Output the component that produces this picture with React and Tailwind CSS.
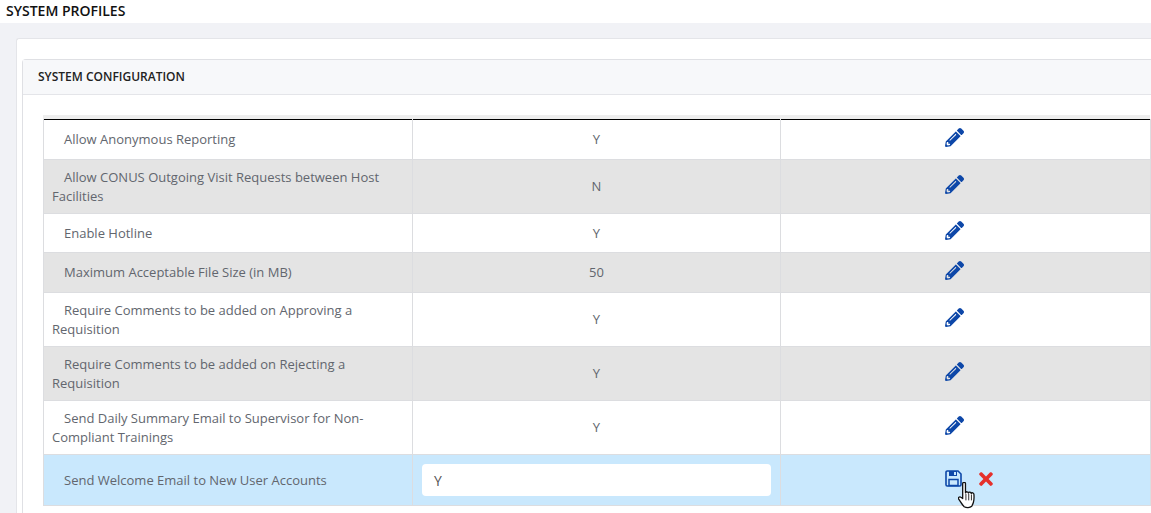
import React from "react";
import { FaPencilAlt, FaTimes } from "react-icons/fa";

const rows = [
  ["Allow Anonymous Reporting", "Y", "h-[40px]", "pt-0"],
  ["Allow CONUS Outgoing Visit Requests between Host Facilities", "N", "h-[54px]", "pt-0"],
  ["Enable Hotline", "Y", "h-[39px]", "pt-[1px]"],
  ["Maximum Acceptable File Size (in MB)", "50", "h-[40px]", "pt-0"],
  ["Require Comments to be added on Approving a Requisition", "Y", "h-[54px]", "pt-[1px]"],
  ["Require Comments to be added on Rejecting a Requisition", "Y", "h-[54px]", "pt-[1px]"],
  ["Send Daily Summary Email to Supervisor for Non-Compliant Trainings", "Y", "h-[54px]", "pt-[1px]"],
];

function SaveIcon() {
  return (
    <svg width="17" height="17" viewBox="0 0 17 17" fill="none">
      <path d="M2.200 1H13L16 4v10.800a1.200 1.200 0 0 1-1.200 1.200H2.200A1.200 1.200 0 0 1 1 14.800V2.200A1.200 1.200 0 0 1 2.200 1Z" stroke="#0d47a8" strokeWidth="1.600" />
      <path d="M4 1h8v5H4Z" fill="#0d47a8" />
      <rect x="9" y="2" width="2" height="3" fill="#c9e8fd" />
      <rect x="4" y="9.500" width="9" height="6" fill="#c9e8fd" stroke="#0d47a8" strokeWidth="1.500" />
    </svg>
  );
}

function Cursor() {
  return (
    <svg className="absolute left-[958px] top-[482px]" width="18" height="27" viewBox="1 1 16 25">
      <path
        d="M5 2.500c0-1.600 2.600-1.600 2.600 0V11c.3-1.300 2.600-1.300 2.700.2.300-1.200 2.500-1.100 2.600.4.400-1 2.400-.9 2.500.7.200 2.600.2 5.600-.5 7.700-.4 1.300-1 2.500-1.500 3.500-1.700 1.500-5 1.500-7 .4-1.300-1.300-2.900-3.900-5.100-7.100-.9-1.200.8-2.600 2.100-1.600L5 16.300Z"
        fill="#fff"
        stroke="#111"
        strokeWidth="1.200"
        strokeLinejoin="round"
      />
      <path d="M8 12v6M10.600 12v6M13.100 12.500V18" stroke="#111" strokeWidth="0.800" />
    </svg>
  );
}

export default function App() {
  return (
    <div className="relative h-[513px] w-[1151px] overflow-hidden bg-white font-['Open_Sans',sans-serif] text-[13px] text-[#62666e]">
      <div className="flex h-[23px] items-start pl-[6px] pt-[2px] text-[14px] leading-[18px] font-semibold text-[#111]">
        SYSTEM PROFILES
      </div>
      <div className="h-[490px] bg-[#f1f2f6] pl-[16px] pt-[15px]">
        <div className="h-[475px] rounded-tl-[3px] border-t border-l border-[#e4e5e9] bg-white pl-[5px] pt-[20px]">
          <div className="h-[454px] rounded-tl-[4px] border-t border-l border-[#dfe0e4] bg-white">
            <div className="flex h-[35px] items-center border-b border-[#e4e5e9] bg-[#f7f8fa] pl-[15px] text-[12px] font-semibold text-[#222]">
              SYSTEM CONFIGURATION
            </div>
            <div className="pl-[20px] pt-[20px]">
              <div className="h-[4px] w-[1107px] bg-[#eeeeee]" />
              <table className="w-[1107px] table-fixed border-collapse border-t border-t-black bg-white">
                <colgroup>
                  <col className="w-[369px]" />
                  <col className="w-[368px]" />
                  <col className="w-[370px]" />
                </colgroup>
                <tbody>
                  {rows.map(([label, value, height, labelPad], i) => (
                    <tr key={label} className={`${height} border-b border-[#dcdde0] ${i % 2 ? "bg-[#e4e4e4]" : "bg-white"}`}>
                      <td className={`border-x border-[#dcdde0] pl-[8px] pr-[9px] ${labelPad} align-middle leading-[19px] [text-indent:12px]`}>
                        {label}
                      </td>
                      <td className="border-r border-[#dcdde0] pt-[1px] text-center align-middle">{value}</td>
                      <td className="border-r border-[#dcdde0] align-middle">
                        <div className="flex justify-center pb-[5px] pr-[22px]">
                          <FaPencilAlt className="text-[19px] text-[#0d47a8]" />
                        </div>
                      </td>
                    </tr>
                  ))}
                  <tr className="h-[51px] border-b border-[#dcdde0] bg-[#c9e8fd]">
                    <td className="border-x border-[#dcdde0] pl-[8px] pr-[9px] pt-[2px] align-middle [text-indent:12px]">
                      Send Welcome Email to New User Accounts
                    </td>
                    <td className="border-r border-[#dcdde0] px-[9px] align-middle">
                      <div className="flex h-[32px] w-[349px] items-center rounded-[4px] bg-white pl-[12px] text-[14px] text-[#555]">
                        Y
                      </div>
                    </td>
                    <td className="border-r border-[#dcdde0] align-middle">
                      <div className="flex items-center justify-center gap-[14px] pb-[3px] pl-[9px]">
                        <SaveIcon />
                        <FaTimes className="text-[20px] text-[#e5302b]" />
                      </div>
                    </td>
                  </tr>
                </tbody>
              </table>
            </div>
          </div>
        </div>
      </div>
      <Cursor />
    </div>
  );
}
